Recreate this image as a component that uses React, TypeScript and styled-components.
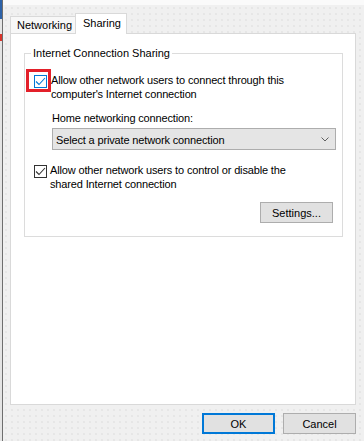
import React from "react";
import styled, { createGlobalStyle } from "styled-components";

const GlobalStyle = createGlobalStyle`
  html, body { margin: 0; padding: 0; }
  body {
    font-family: "Liberation Sans", Arial, sans-serif;
    font-size: 11px;
    color: #000;
    background: #f0f0f0;
  }
  * { box-sizing: border-box; }
`;

const Window = styled.div`
  width: 364px;
  height: 441px;
  display: flex;
  overflow: hidden;
`;

const LeftFrame = styled.div`
  width: 3px;
  flex: none;
  background:
    linear-gradient(#2d62a8, #2d62a8) 0 0 / 2px 19px no-repeat,
    linear-gradient(#d9342b, #d9342b) 0 34px / 2px 7px no-repeat,
    linear-gradient(to right, #e4e4e4 0 2px, #6e6e6e 2px 3px);
`;

const Main = styled.div`
  flex: 1;
  min-width: 0;
  display: flex;
  flex-direction: column;
`;

const TopBand = styled.div`
  height: 5px;
  flex: none;
  background: #fafafa;
`;

const Body = styled.div`
  flex: 1;
  display: flex;
  flex-direction: column;
  padding: 8px 8px 7px 7px;
  background-color: #f0f0f0;
  background-image: radial-gradient(circle, #dadada 0.6px, transparent 0.8px);
  background-size: 6px 6px;
`;

const TabRow = styled.div`
  display: flex;
  align-items: flex-end;
  height: 20px;
  flex: none;
`;

const Tab = styled.div<{ $active?: boolean }>`
  display: flex;
  align-items: center;
  border: 1px solid #d9d9d9;
  border-bottom: 0;
  background: ${(p) => (p.$active ? "#fff" : "#f7f7f7")};
  width: ${(p) => (p.$active ? "52px" : "66px")};
  height: ${(p) => (p.$active ? "21px" : "17px")};
  margin-bottom: ${(p) => (p.$active ? "-1px" : "0")};
  margin-left: ${(p) => (p.$active ? "-1px" : "0")};
  padding: ${(p) => (p.$active ? "0 0 2px 7px" : "0 0 0 6px")};
  z-index: ${(p) => (p.$active ? 1 : 0)};
  white-space: nowrap;
`;

const Panel = styled.div`
  flex: 1;
  background: #fff;
  border: 1px solid #d9d9d9;
  padding: 13px 12px 0 13px;
`;

const Group = styled.fieldset`
  margin: 0;
  padding: 0 6px 13px 1px;
  border: 1px solid #dcdcdc;
  min-width: 0;
`;

const Legend = styled.legend`
  padding: 0 2px;
  margin-left: 5px;
  line-height: 13px;
`;

const CheckRow = styled.div<{ $top: number }>`
  display: flex;
  align-items: flex-start;
  margin-top: ${(p) => p.$top}px;
`;

const Highlight = styled.span`
  display: flex;
  flex: none;
  border: 3px solid #e3202a;
  padding: 3px 1px 1px 5px;
`;

const Box = styled.span<{ $accent?: boolean; $offset?: boolean }>`
  display: flex;
  flex: none;
  width: 13px;
  height: 13px;
  background: #fff;
  border: 1px solid ${(p) => (p.$accent ? "#0078d7" : "#333")};
  color: ${(p) => (p.$accent ? "#0078d7" : "#333")};
  margin: ${(p) => (p.$offset ? "2px 3px 0 8px" : "0")};
`;

const CheckText = styled.span<{ $top: number }>`
  line-height: 14px;
  margin-top: ${(p) => p.$top}px;
  letter-spacing: -0.15px;
`;

const SubSection = styled.div`
  display: flex;
  flex-direction: column;
  margin: 10px 0 0 26px;
`;

const FieldLabel = styled.span`
  line-height: 14px;
  letter-spacing: -0.15px;
`;

const Select = styled.div`
  margin-top: 3px;
  height: 22px;
  display: flex;
  align-items: center;
  justify-content: space-between;
  padding: 1px 6px 0 3px;
  background: #e5e5e5;
  border: 1px solid #adadad;
  letter-spacing: -0.15px;
`;

const ButtonRow = styled.div<{ $gap: number; $top: number; $right: number }>`
  display: flex;
  justify-content: flex-end;
  gap: ${(p) => p.$gap}px;
  margin-top: ${(p) => p.$top}px;
  margin-right: ${(p) => p.$right}px;
  flex: none;
`;

const Button = styled.button<{ $default?: boolean }>`
  width: 73px;
  height: 21px;
  padding: 0;
  font: inherit;
  color: #000;
  background: #e1e1e1;
  border: ${(p) => (p.$default ? "2px solid #0078d7" : "1px solid #adadad")};
`;

const Check = () => (
  <svg width="11" height="11" viewBox="0 0 11 11">
    <polyline
      points="1,5.5 4,8.5 10,2"
      fill="none"
      stroke="currentColor"
      strokeWidth="1.1"
    />
  </svg>
);

const Chevron = () => (
  <svg width="8" height="5" viewBox="0 0 8 5">
    <polyline points="0.5,0.5 4,4 7.5,0.5" fill="none" stroke="#606060" strokeWidth="1" />
  </svg>
);

export default function App() {
  return (
    <>
      <GlobalStyle />
      <Window>
        <LeftFrame />
        <Main>
          <TopBand />
          <Body>
            <TabRow>
              <Tab>Networking</Tab>
              <Tab $active>Sharing</Tab>
            </TabRow>
            <Panel>
              <Group>
                <Legend>Internet Connection Sharing</Legend>
                <CheckRow $top={9}>
                  <Highlight>
                    <Box $accent>
                      <Check />
                    </Box>
                  </Highlight>
                  <CheckText $top={4}>
                    Allow other network users to connect through this
                    <br />
                    computer's Internet connection
                  </CheckText>
                </CheckRow>
                <SubSection>
                  <FieldLabel>Home networking connection:</FieldLabel>
                  <Select>
                    <span>Select a private network connection</span>
                    <Chevron />
                  </Select>
                </SubSection>
                <CheckRow $top={13}>
                  <Box $offset>
                    <Check />
                  </Box>
                  <CheckText $top={0}>
                    Allow other network users to control or disable the
                    <br />
                    shared Internet connection
                  </CheckText>
                </CheckRow>
                <ButtonRow $gap={0} $top={11} $right={3}>
                  <Button>Settings...</Button>
                </ButtonRow>
              </Group>
            </Panel>
            <ButtonRow $gap={8} $top={8} $right={0}>
              <Button $default>OK</Button>
              <Button>Cancel</Button>
            </ButtonRow>
          </Body>
        </Main>
      </Window>
    </>
  );
}
